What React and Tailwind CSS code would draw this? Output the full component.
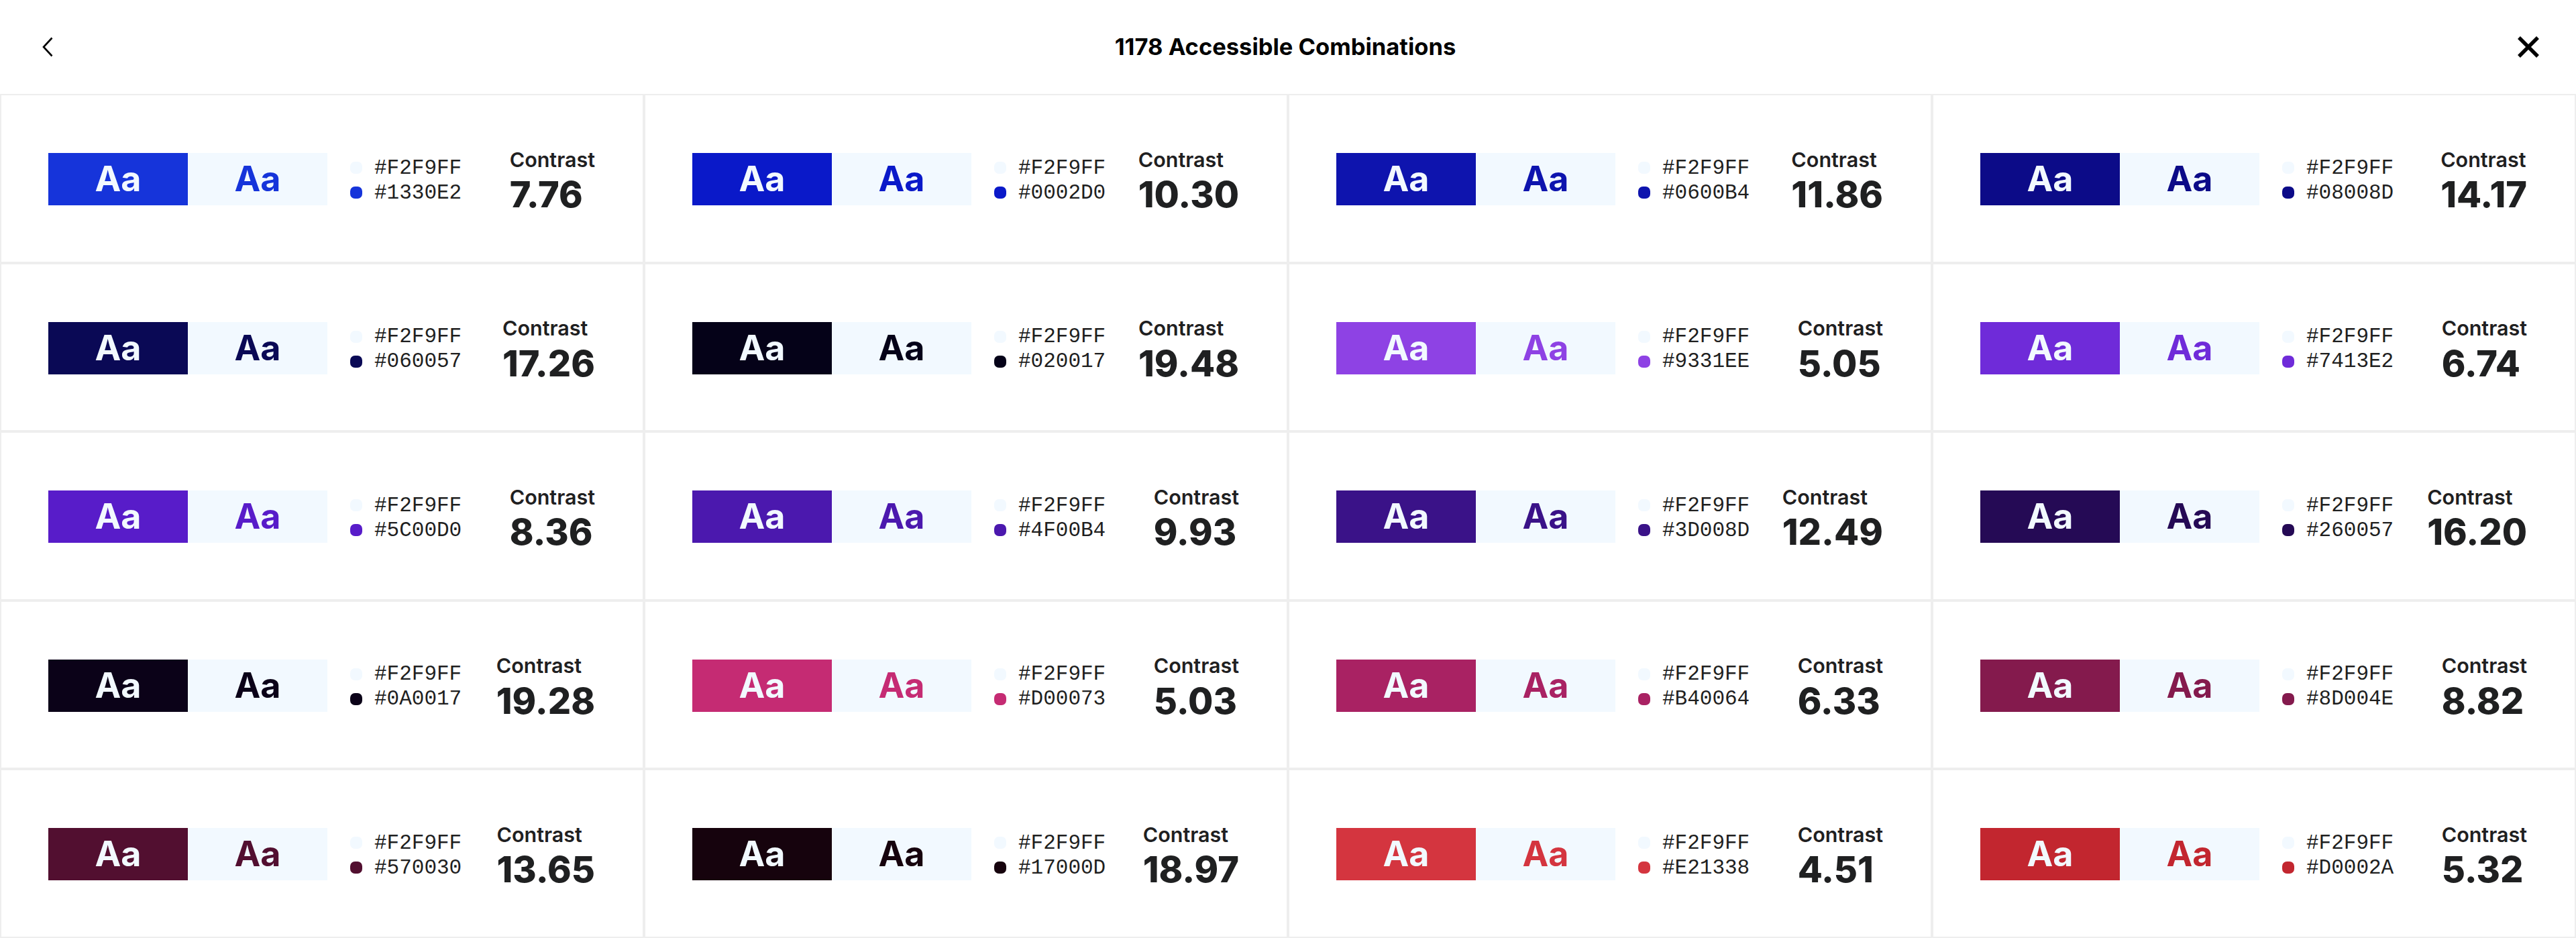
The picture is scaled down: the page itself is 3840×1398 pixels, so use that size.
import React from 'react';

// shown = the swatch colour as it appears in the screenshot, hex = the label
const combos = [
    { hex: '#1330E2', shown: '#1634DA', ratio: '7.76' },
    { hex: '#0002D0', shown: '#0A19C9', ratio: '10.30' },
    { hex: '#0600B4', shown: '#0E14AE', ratio: '11.86' },
    { hex: '#08008D', shown: '#0C0B88', ratio: '14.17' },
    { hex: '#060057', shown: '#0A0955', ratio: '17.26' },
    { hex: '#020017', shown: '#050218', ratio: '19.48' },
    { hex: '#9331EE', shown: '#8E42E4', ratio: '5.05' },
    { hex: '#7413E2', shown: '#6F2BD9', ratio: '6.74' },
    { hex: '#5C00D0', shown: '#581CC9', ratio: '8.36' },
    { hex: '#4F00B4', shown: '#4B18AE', ratio: '9.93' },
    { hex: '#3D008D', shown: '#3A1288', ratio: '12.49' },
    { hex: '#260057', shown: '#250A55', ratio: '16.20' },
    { hex: '#0A0017', shown: '#0B0218', ratio: '19.28' },
    { hex: '#D00073', shown: '#C52B73', ratio: '5.03' },
    { hex: '#B40064', shown: '#A92263', ratio: '6.33' },
    { hex: '#8D004E', shown: '#841A4D', ratio: '8.82' },
    { hex: '#570030', shown: '#520F30', ratio: '13.65' },
    { hex: '#17000D', shown: '#16030D', ratio: '18.97' },
    { hex: '#E21338', shown: '#D4353F', ratio: '4.51' },
    { hex: '#D0002A', shown: '#C2262F', ratio: '5.32' },
];

const LIGHT = '#F2F9FF';

function Combo({ hex, shown, ratio }) {
    return (
        <div className="h-[251.5px] border-2 border-[#eeeeee] flex items-center pl-[70px] pr-[71px]">
            <div className="flex mt-[3px]">
                <div className="w-[208px] h-[78px] flex items-center justify-center" style={{ backgroundColor: shown }}>
                    <span className="text-[52px] leading-none font-bold text-[#F2F9FF]">Aa</span>
                </div>
                <div className="w-[208px] h-[78px] flex items-center justify-center bg-[#F2F9FF]">
                    <span className="text-[52px] leading-none font-bold" style={{ color: shown }}>Aa</span>
                </div>
            </div>

            <div className="ml-[34px] mt-[6px] flex flex-col">
                <div className="flex items-center gap-[18px] h-[37px]">
                    <span className="w-[18px] h-[18px] rounded-[7px] bg-[#F2F9FF]" />
                    <span className="font-['Liberation_Mono',monospace] text-[31px] leading-none text-[#1f1f1f]">{LIGHT}</span>
                </div>
                <div className="flex items-center gap-[18px] h-[37px]">
                    <span className="w-[18px] h-[18px] rounded-[7px]" style={{ backgroundColor: shown }} />
                    <span className="font-['Liberation_Mono',monospace] text-[31px] leading-none text-[#1f1f1f]">{hex}</span>
                </div>
            </div>

            <div className="ml-auto flex flex-col items-start pt-[8px]">
                <span className="text-[30.5px] leading-none font-semibold text-[#1f2021]">Contrast</span>
                <span className="mt-[10px] text-[54px] leading-none font-extrabold text-[#1f2021]">{ratio}</span>
            </div>
        </div>
    );
}

export default function App() {
    return (
        <div className="w-full bg-white font-['Inter',sans-serif]">
            <header className="h-[140px] flex items-center justify-between pl-[62px] pr-[54px]">
                <button type="button" className="w-[18px] h-[32px] flex items-center justify-center">
                    <svg width="16" height="30" viewBox="0 0 16 30" fill="none">
                        <path d="M14.5 1.5 L2 15 L14.5 28.5" stroke="#000" strokeWidth="2.6" />
                    </svg>
                </button>
                <h1 className="text-[34.5px] font-bold text-black leading-none">1178 Accessible Combinations</h1>
                <button type="button" className="w-[34px] h-[34px] flex items-center justify-center">
                    <svg width="34" height="34" viewBox="0 0 34 34" fill="none">
                        <path d="M3 3 L31 31 M31 3 L3 31" stroke="#000" strokeWidth="5.5" />
                    </svg>
                </button>
            </header>

            <div className="grid grid-cols-4">
                {combos.map((c) => (
                    <Combo key={c.hex} hex={c.hex} shown={c.shown} ratio={c.ratio} />
                ))}
            </div>
        </div>
    );
}
